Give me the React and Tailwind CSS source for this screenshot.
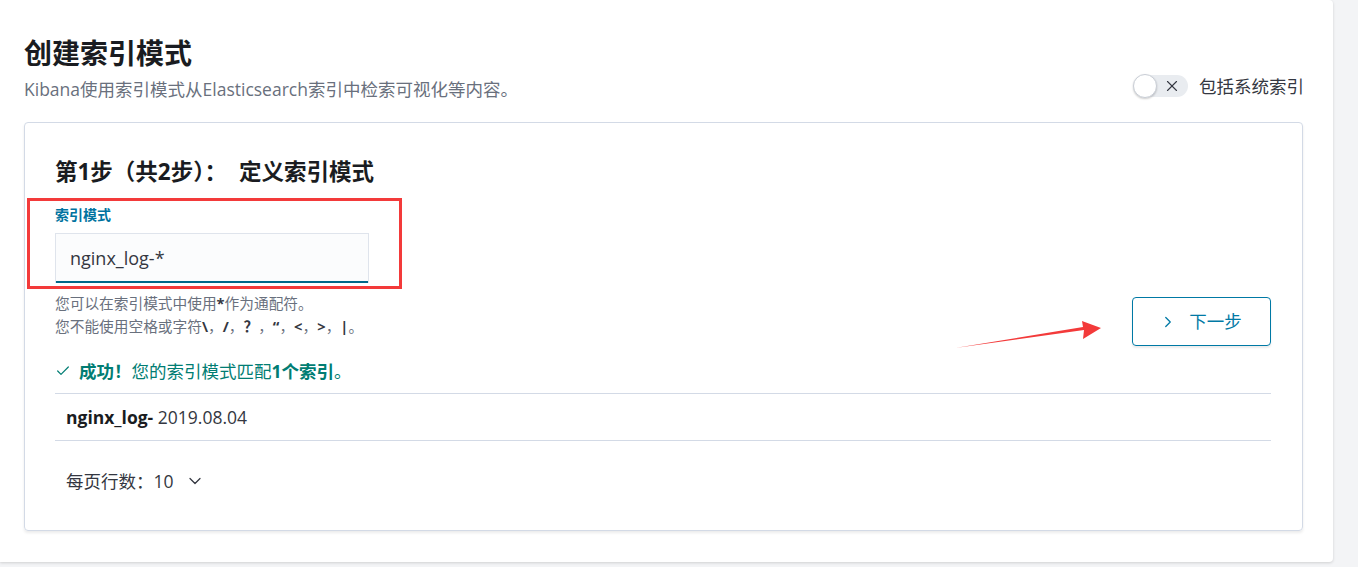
import React from 'react';
import { Check, X, ChevronRight, ChevronDown } from 'lucide-react';

const font = { fontFamily: '"Open Sans", "Noto Sans CJK SC", sans-serif' };

export default function App() {
  return (
    <div className="min-h-screen bg-[#f3f4f6]" style={font}>
      <div className="relative w-[1333px] h-[562px] bg-white rounded-r-[4px] shadow-[0_1px_3px_rgba(0,0,0,0.15)] pl-6 pr-[30px] pt-[35px]">
        {/* Header */}
        <div className="flex items-end justify-between">
          <div>
            <h1 className="text-[28px] leading-[36px] font-bold text-[#1a1c21]">创建索引模式</h1>
            <p className="mt-[6px] text-[17.5px] leading-[24px] text-[#69707d]">
              Kibana使用索引模式从Elasticsearch索引中检索可视化等内容。
            </p>
          </div>
          <div className="flex items-center gap-[11px] mb-[3px] -mr-[1px]">
            <div className="relative w-[54px] h-[22px] rounded-full bg-[#e9ecf0]">
              <div className="absolute -left-[1px] -top-[1px] w-[24px] h-[24px] rounded-full bg-white border border-[#c9ced6] shadow-[0_1px_2px_rgba(0,0,0,0.2)]" />
              <X className="absolute right-[7px] top-[2px] w-[18px] h-[18px] text-[#343741]" strokeWidth={1.5} />
            </div>
            <span className="text-[17.5px] leading-[24px] text-[#343741]">包括系统索引</span>
          </div>
        </div>

        {/* Card */}
        <div className="relative mt-[21px] border border-[#d3dae6] rounded-[4px] shadow-[0_2px_3px_rgba(0,0,0,0.08)] pl-[30px] pr-[31px] pt-[34px] pb-[37px]">
          <h2 className="text-[22.5px] leading-[30px] font-bold text-[#1a1c21]">
            第1步（共2步）：<span className="ml-[12px]">定义索引模式</span>
          </h2>

          <div className="mt-[18px] text-[14px] leading-[20px] font-bold text-[#0073a0]">索引模式</div>
          <div className="mt-[8px] w-[314px] h-[50px] bg-[#fbfcfd] border border-[#dfe4ec] border-b-0 shadow-[inset_0_-2px_0_#00688a] flex items-center pl-[14px] text-[18px] text-[#343741]">
            nginx_log-*
          </div>

          <div className="mt-[9px] flex items-start justify-between">
            <div className="text-[14.7px] leading-[23px] text-[#69707d]">
              <div>您可以在索引模式中使用<b className="text-[#343741]">*</b>作为通配符。</div>
              <div>
                您不能使用空格或字符<b className="text-[#343741]">\</b>，<b className="text-[#343741]">/</b>，<b className="text-[#343741]">？</b>，<b className="text-[#343741]">“</b>，<b className="text-[#343741]">&lt;</b>，<b className="text-[#343741]">&gt;</b>，<b className="text-[#343741]">|</b>。
              </div>
            </div>
            <button className="mt-[5px] w-[139px] h-[49px] border border-[#0079a5] rounded-[4px] shadow-[0_2px_2px_rgba(0,0,0,0.08)] flex items-center justify-center gap-[12px] text-[17.5px] text-[#0079a5]">
              <ChevronRight className="w-[18px] h-[18px]" strokeWidth={1.7} />
              <span className="pr-[2px]">下一步</span>
            </button>
          </div>

          <div className="mt-[13px] flex items-center text-[17.5px] leading-[24px] text-[#017d73]">
            <Check className="w-[16px] h-[16px] mr-[8px]" strokeWidth={1.8} />
            <b>成功！</b>
            <span>您的索引模式匹配</span>
            <b>1个索引</b>
            <span>。</span>
          </div>

          <div className="mt-[10px] border-t border-[#d3dae6] h-[47px] flex items-center pl-[11px] text-[17.5px] text-[#343741]">
            <b className="text-[#1a1c21]">nginx_log-</b>&nbsp;2019.08.04
          </div>
          <div className="border-t border-[#d3dae6]" />

          <div className="mt-[28px] flex items-center pl-[11px] text-[17.5px] leading-[24px] text-[#343741]">
            <span>每页行数：10</span>
            <ChevronDown className="ml-[11px] w-[20px] h-[20px]" strokeWidth={1.5} />
          </div>

          {/* annotation box */}
          <div className="absolute left-[2px] top-[75px] w-[375px] h-[91px] border-[3px] border-[#f33a3a] pointer-events-none" />
        </div>

        {/* annotation arrow */}
        <svg className="absolute left-[950px] top-[315px] pointer-events-none" width="160" height="40" viewBox="950 315 160 40">
          <polygon points="955,348 1084,330 1083,339 1101,328 1082,321 1083,327" fill="#f33a3a" />
        </svg>
      </div>
    </div>
  );
}
